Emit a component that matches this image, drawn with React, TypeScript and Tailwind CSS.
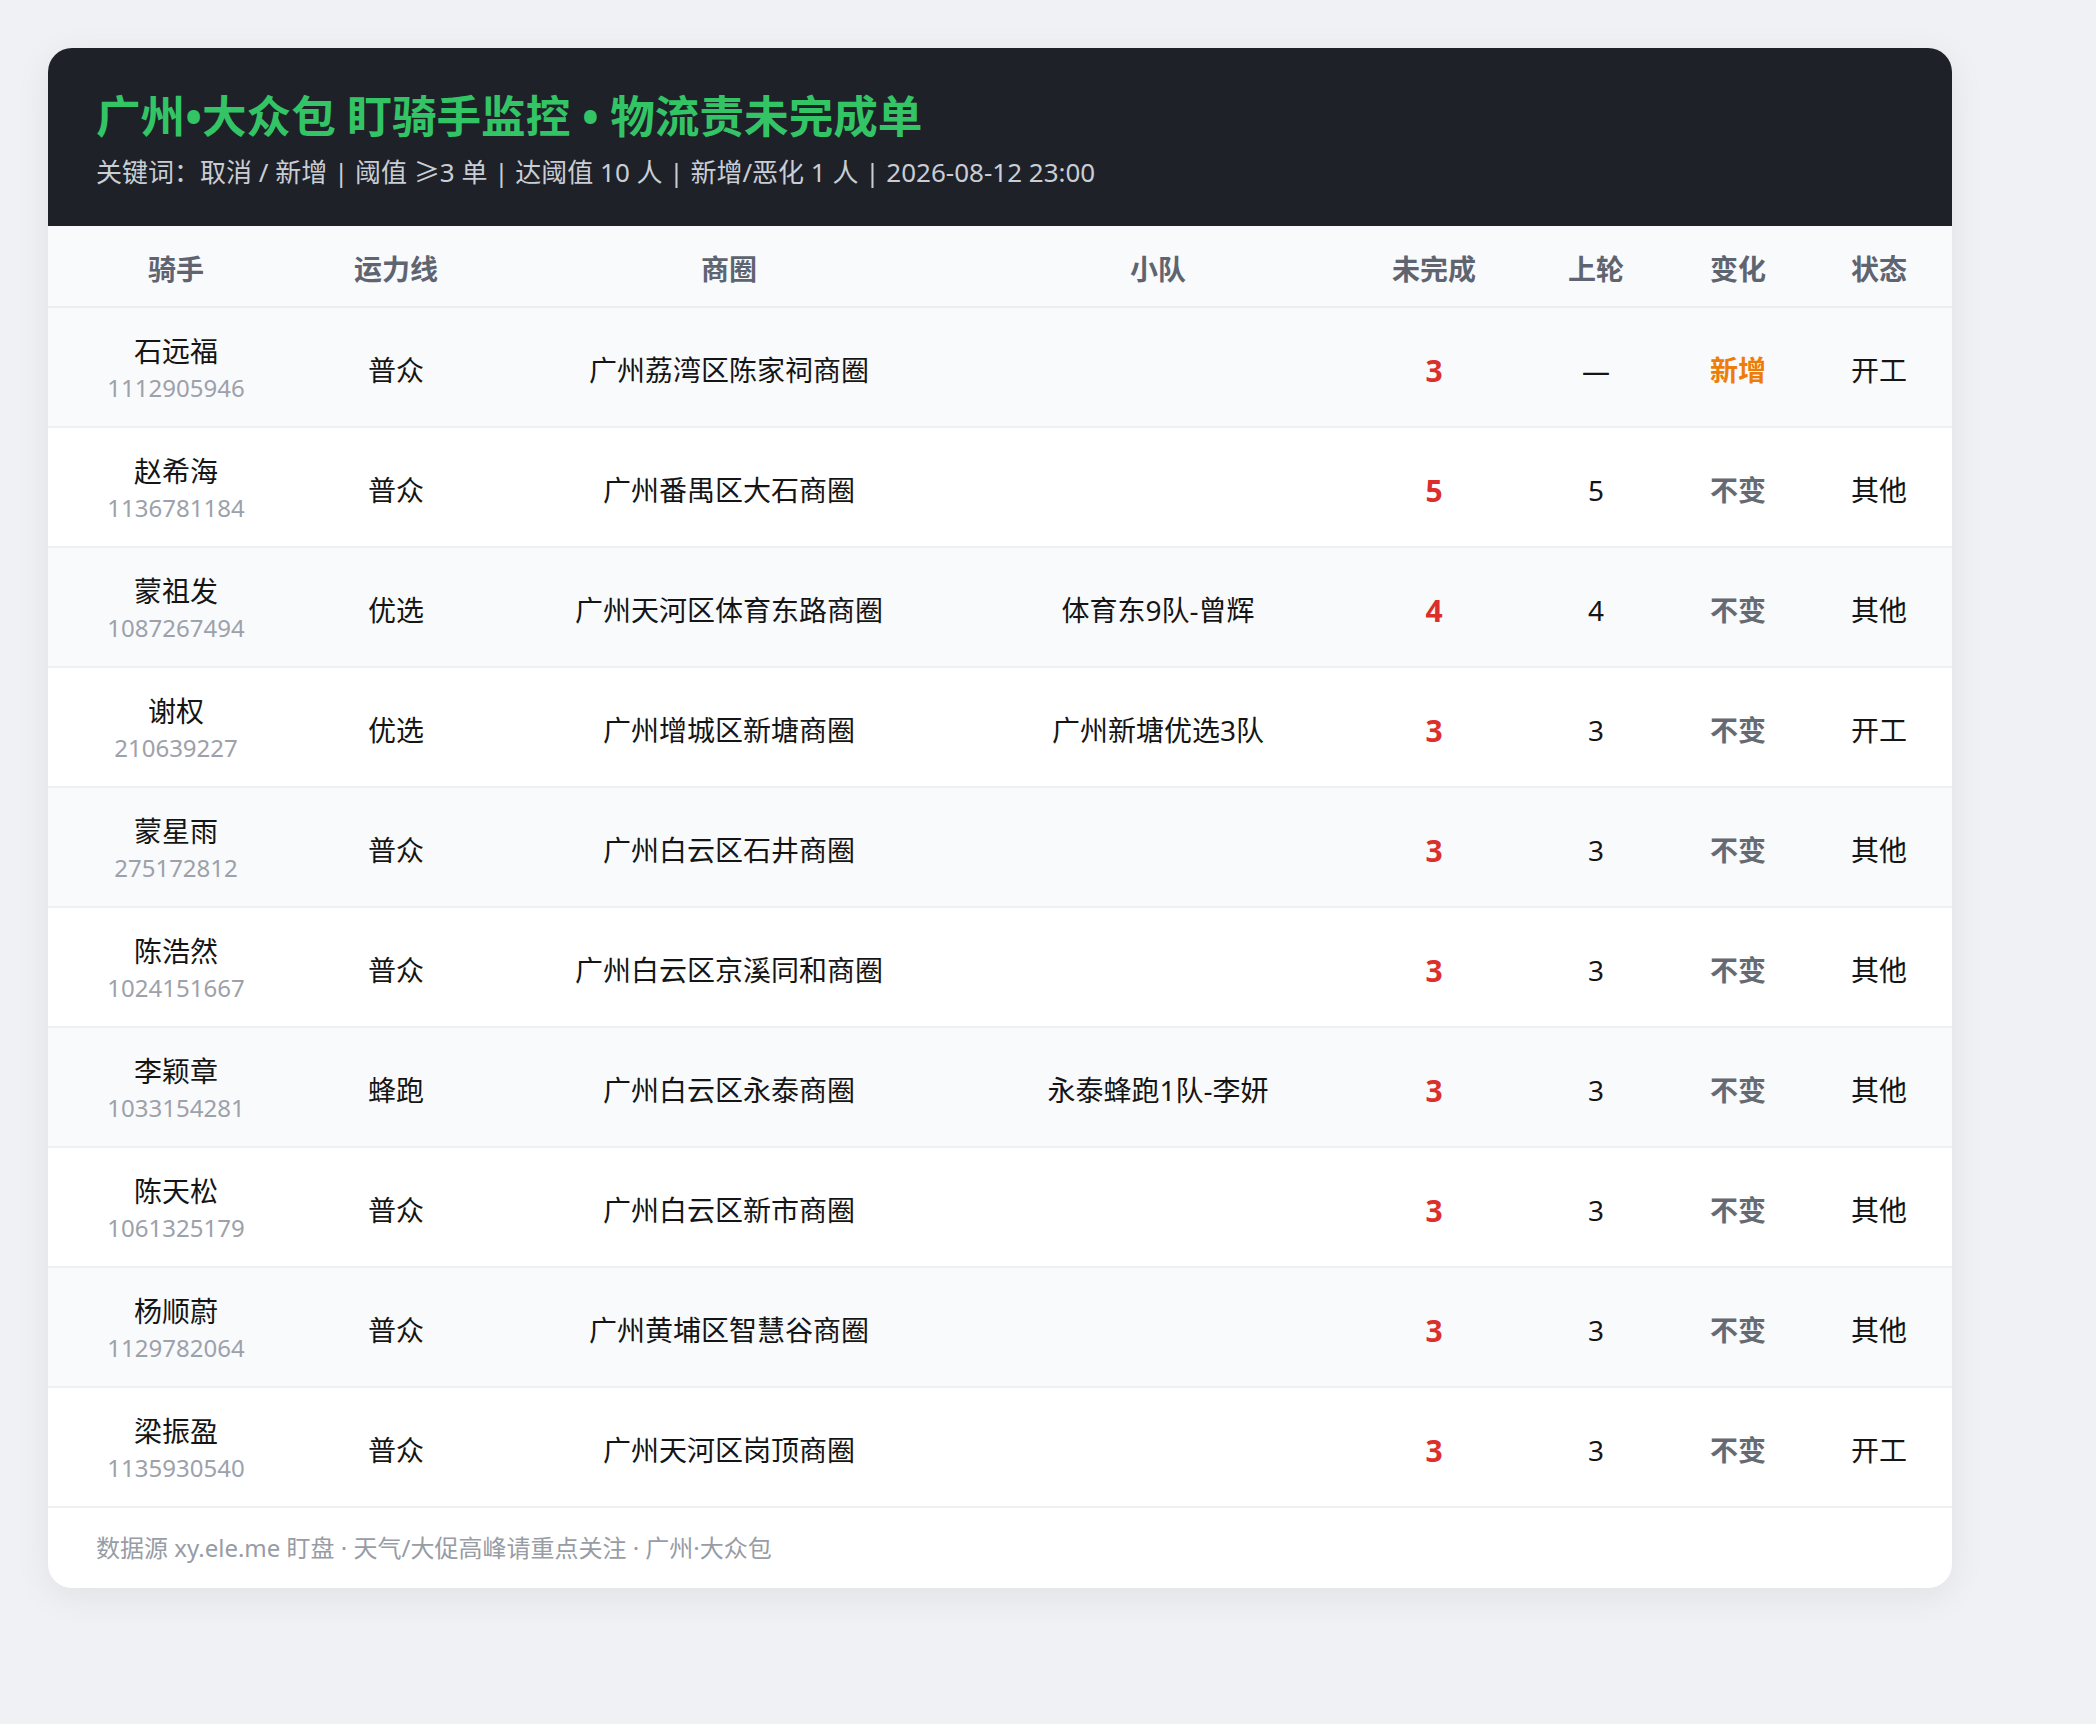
const rows = [
  { name: "石远福", id: "1112905946", line: "普众", area: "广州荔湾区陈家祠商圈", team: "", open: 3, last: "—", change: "新增", status: "开工" },
  { name: "赵希海", id: "1136781184", line: "普众", area: "广州番禺区大石商圈", team: "", open: 5, last: "5", change: "不变", status: "其他" },
  { name: "蒙祖发", id: "1087267494", line: "优选", area: "广州天河区体育东路商圈", team: "体育东9队-曾辉", open: 4, last: "4", change: "不变", status: "其他" },
  { name: "谢权", id: "210639227", line: "优选", area: "广州增城区新塘商圈", team: "广州新塘优选3队", open: 3, last: "3", change: "不变", status: "开工" },
  { name: "蒙星雨", id: "275172812", line: "普众", area: "广州白云区石井商圈", team: "", open: 3, last: "3", change: "不变", status: "其他" },
  { name: "陈浩然", id: "1024151667", line: "普众", area: "广州白云区京溪同和商圈", team: "", open: 3, last: "3", change: "不变", status: "其他" },
  { name: "李颖章", id: "1033154281", line: "蜂跑", area: "广州白云区永泰商圈", team: "永泰蜂跑1队-李妍", open: 3, last: "3", change: "不变", status: "其他" },
  { name: "陈天松", id: "1061325179", line: "普众", area: "广州白云区新市商圈", team: "", open: 3, last: "3", change: "不变", status: "其他" },
  { name: "杨顺蔚", id: "1129782064", line: "普众", area: "广州黄埔区智慧谷商圈", team: "", open: 3, last: "3", change: "不变", status: "其他" },
  { name: "梁振盈", id: "1135930540", line: "普众", area: "广州天河区岗顶商圈", team: "", open: 3, last: "3", change: "不变", status: "开工" },
];

const headers = ["骑手", "运力线", "商圈", "小队", "未完成", "上轮", "变化", "状态"];

export default function App() {
  return (
    <div
      className="min-h-[1724px] bg-[#f0f1f4] p-12"
      style={{ fontFamily: '"Noto Sans", "Noto Sans CJK SC", sans-serif' }}
    >
      <div className="w-[1904px] rounded-3xl bg-white overflow-hidden shadow-[0_8px_36px_rgba(20,24,40,0.07)]">
        {/* Header */}
        <div className="bg-[#1f2129] px-12 pt-10 pb-9">
          <h1 className="text-[44.6px] leading-[56px] font-bold text-[#33c466]">
            广州•大众包 盯骑手监控 • 物流责未完成单
          </h1>
          <p className="mt-[10px] text-[26px] leading-[36px] text-[#c9cdd4]">
            关键词：取消 / 新增 | 阈值 ≥3 单 | 达阈值 10 人 | 新增/恶化 1 人 | 2026-08-12 23:00
          </p>
        </div>

        <table className="w-full table-fixed border-collapse">
          <colgroup>
            <col className="w-[256px]" />
            <col className="w-[184px]" />
            <col className="w-[482px]" />
            <col className="w-[376px]" />
            <col className="w-[176px]" />
            <col className="w-[148px]" />
            <col className="w-[136px]" />
            <col className="w-[146px]" />
          </colgroup>
          <thead>
            <tr className="bg-[#f9fafc] border-b-2 border-[#eceef2]">
              {headers.map((h) => (
                <th key={h} className="h-[81px] pt-[5px] text-center text-[28px] font-bold text-[#5f6570]">
                  {h}
                </th>
              ))}
            </tr>
          </thead>
          <tbody>
            {rows.map((r, i) => (
              <tr
                key={r.id}
                className={`h-[120px] border-b-2 border-[#eef0f3] text-center text-[28px] text-[#151515] ${
                  i % 2 === 0 ? "bg-[#f9fafc]" : "bg-white"
                }`}
              >
                <td className="pt-[6px]">
                  <div className="leading-[36px]">{r.name}</div>
                  <div className="text-[24px] leading-[38px] text-[#9ca1aa]">{r.id}</div>
                </td>
                <td className="pt-[6px]">{r.line}</td>
                <td className="pt-[6px]">{r.area}</td>
                <td className="pt-[6px]">{r.team}</td>
                <td className="pt-[6px] text-[30px] font-bold text-[#dc2e2b]">{r.open}</td>
                <td className="pt-[6px]">{r.last}</td>
                <td
                  className={`pt-[6px] font-bold ${
                    r.change === "新增" ? "text-[#ee7d08]" : "text-[#666a72]"
                  }`}
                >
                  {r.change}
                </td>
                <td className="pt-[6px]">{r.status}</td>
              </tr>
            ))}
          </tbody>
        </table>

        {/* Footer */}
        <div className="px-12 py-6 text-[24px] leading-[32px] text-[#979ca5]">
          数据源 xy.ele.me 盯盘 · 天气/大促高峰请重点关注 · 广州·大众包
        </div>
      </div>
    </div>
  );
}
